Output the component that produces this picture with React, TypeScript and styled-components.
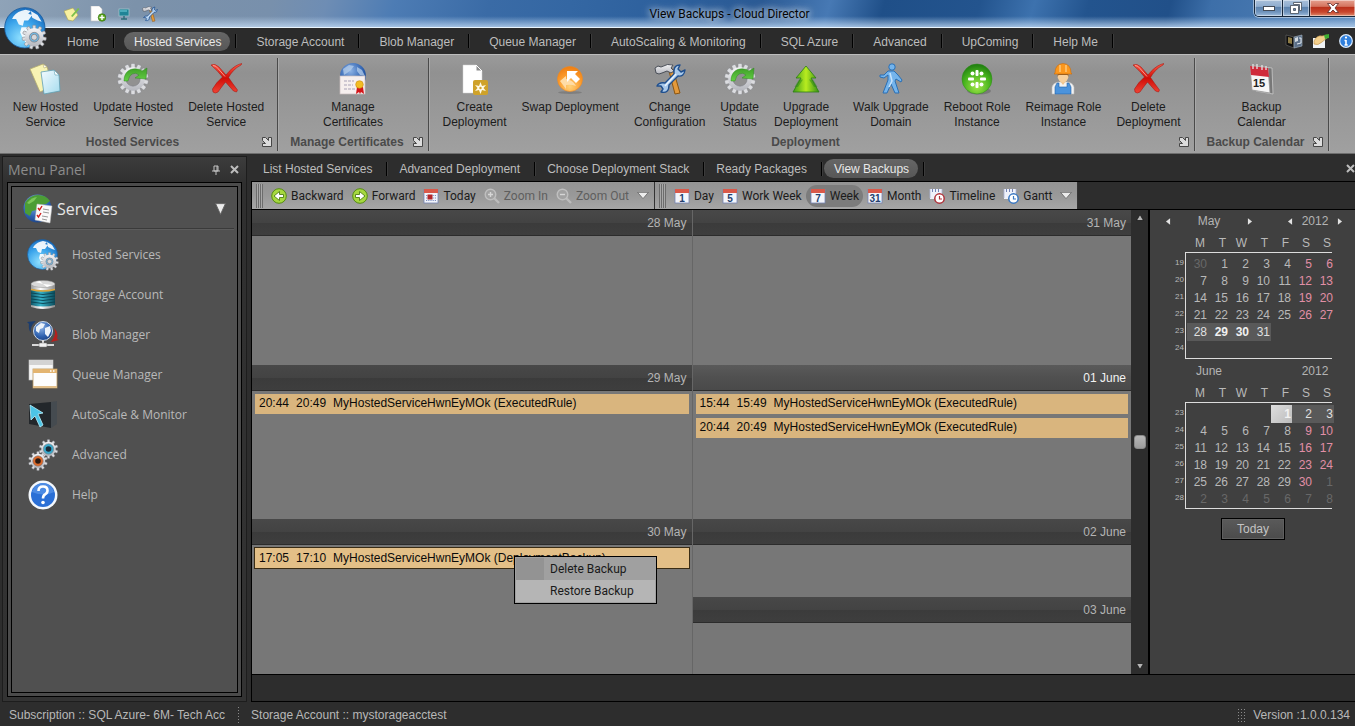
import React from 'react';
import styled, { createGlobalStyle, css } from 'styled-components';

const GlobalStyle = createGlobalStyle`
  *, *::before, *::after { box-sizing: border-box; }
  html, body { margin: 0; padding: 0; background: #2d2d2d; }
  body { font: 12px/15px "Liberation Sans", Arial, sans-serif; color: #c0c0c0; }
  button { font: inherit; color: inherit; background: none; border: 0; padding: 0; margin: 0; cursor: pointer; }
  a { color: inherit; text-decoration: none; }
  ul { list-style: none; margin: 0; padding: 0; }
  svg { display: block; flex: none; }
`;

const panelFont = '"Open Sans", Tahoma, sans-serif';
const uiFont = 'Roboto, "Segoe UI", sans-serif';

/* ---------- window frame ---------- */

const Window = styled.div`
  min-height: 100vh;
  display: flex;
  flex-direction: column;
  background: #2d2d2d;
`;

const TitleBar = styled.header`
  position: relative;
  height: 28px;
  display: flex;
  justify-content: space-between;
  align-items: flex-start;
  border-bottom: 1px solid #e8f3fc;
  background:
    linear-gradient(to bottom, rgba(210, 230, 250, 0) 60%, rgba(196, 220, 245, 0.75) 100%),
    linear-gradient(105deg, #8fa3b8 0%, #7c92aa 10%, #7890ac 20%, #6e8db4 24%, #4d7cb4 29%, #3a6ba6 36%, #3467a3 42%, #2c5f9c 50%, #2b5a94 56%, #4779b4 61%, #1f4f88 65%, #23548e 72%, #3d72ae 76%, #23548e 80%, #215089 86%, #3d6fa9 89%, #5483b8 100%);
`;

const QuickAccess = styled.nav`
  display: flex;
  align-items: center;
  gap: 10px;
  padding: 6px 0 0 64px;
  height: 22px;
`;

const QuickButton = styled.button`
  width: 16px;
  height: 16px;
`;

const TitleAnchor = styled.div`
  position: absolute;
  inset: 5px 0 auto 104px;
  text-align: center;
  pointer-events: none;
`;

const TitleText = styled.h1`
  display: inline-block;
  margin: 0;
  font: 12px/18px ${uiFont};
  color: #050505;
  text-shadow: 0 0 6px rgba(255, 255, 255, 0.9), 0 0 10px rgba(255, 255, 255, 0.8);
`;

const WindowButtons = styled.div`
  display: flex;
  height: 17px;
  border: 1px solid #16273c;
  border-top: 0;
  border-right: 0;
  border-radius: 0 0 0 5px;
  overflow: hidden;
  box-shadow: 0 0 0 1px rgba(255, 255, 255, 0.45);
`;

const WindowButton = styled.button<{ $wide?: boolean; $close?: boolean }>`
  width: ${p => (p.$wide ? '46px' : '27px')};
  display: flex;
  align-items: center;
  justify-content: center;
  border-left: 1px solid #16273c;
  box-shadow: inset 0 0 0 1px rgba(255, 255, 255, 0.45);
  background: ${p => (p.$close
    ? 'linear-gradient(#e5a08f 0%, #d4735e 40%, #b9301a 45%, #c8452d 75%, #de8a6a 100%)'
    : 'linear-gradient(#a9c0da 0%, #8fadcf 40%, #5d83ad 45%, #7094bd 75%, #9fbcdb 100%)')};
  &:first-child { border-left: 0; }
`;

const Orb = styled.button`
  position: absolute;
  left: 4px;
  top: 7px;
  z-index: 2;
`;

/* ---------- primary navigation ---------- */

const MenuBar = styled.nav`
  height: 27px;
  display: flex;
  align-items: center;
  justify-content: space-between;
  padding-left: 47px;
  background: #2b2b2b;
  border-bottom: 1px solid #bdbdbd;
`;

const TabList = styled.ul`
  display: flex;
  align-items: center;
`;

const TabItem = styled.li<{ $compact?: boolean }>`
  height: 14px;
  display: flex;
  align-items: center;
  padding: ${p => (p.$compact ? '0 5px 0 2px' : '0 5px 0 10px')};
  border-right: 1px solid #000;
  box-shadow: 1px 0 0 #3c3c3c;
`;

const TabLink = styled.a<{ $active?: boolean }>`
  padding: 0 9px 0 10px;
  height: 19px;
  line-height: 20px;
  border-radius: 10px;
  white-space: nowrap;
  color: #bdbdbd;
  ${p => p.$active && css`
    color: #e8e8e8;
    background: linear-gradient(#666, #575757);
  `}
`;

const MenuTools = styled.div`
  display: flex;
  gap: 9px;
  padding-right: 2px;
`;

/* ---------- ribbon ---------- */

const Ribbon = styled.section`
  display: flex;
  height: 99px;
  padding: 3px 0 2px;
  background: linear-gradient(#9a9a9a, #919191 18%, #989898 55%, #a0a0a0);
  border-bottom: 1px solid #6e6e6e;
`;

const RibbonGroup = styled.section<{ $width?: number }>`
  display: flex;
  flex-direction: column;
  justify-content: space-between;
  flex: none;
  min-width: ${p => (p.$width ? `${p.$width}px` : '0')};
  border-right: 1px solid #4a4a4a;
  box-shadow: 1px 0 0 #a9a9a9;
`;

const RibbonButtons = styled.div`
  display: flex;
  justify-content: center;
  gap: 15px;
  padding: 5px 8px 0;
`;

const RibbonButton = styled.button`
  display: flex;
  flex-direction: column;
  align-items: center;
  color: #1c1c1c;
  white-space: pre-line;
`;

const RibbonLabel = styled.span`
  margin-top: 5px;
  line-height: 15px;
  text-align: center;
`;

const RibbonCaption = styled.footer`
  display: flex;
  align-items: center;
  height: 18px;
  padding: 0 4px;
`;

const RibbonTitle = styled.h2`
  flex: 1;
  margin: 0;
  font-size: 12px;
  line-height: 18px;
  text-align: center;
  color: #4a4a4a;
`;

/* ---------- body layout ---------- */

const Body = styled.div`
  flex: 1;
  display: flex;
  padding: 2px 0 0 2px;
  gap: 4px;
`;

const SidePanel = styled.aside`
  width: 245px;
  flex: none;
  display: flex;
  flex-direction: column;
  padding: 0 4px 4px;
  border: 1px solid #1d1d1d;
  background: linear-gradient(#3c3c3c, #2f2f2f 26px, #333 100%);
`;

const SideHeader = styled.header`
  height: 25px;
  display: flex;
  align-items: center;
  gap: 10px;
  padding: 0 3px 0 1px;
`;

const SideTitle = styled.h2`
  flex: 1;
  margin: 0;
  font: 14px/20px ${panelFont};
  color: #8c8c8c;
`;

const SideFrame = styled.div`
  flex: 1;
  display: flex;
  padding: 3px;
  border: 1px solid #000;
  background: #4b4b4b;
`;

const SideContent = styled.div`
  flex: 1;
  padding: 3px;
  border: 1px solid #000;
  background: #505050;
`;

const ServicesHeader = styled.button`
  width: 100%;
  height: 39px;
  display: flex;
  align-items: center;
  gap: 4px;
  padding: 0 8px;
  border-bottom: 1px solid #3a3a3a;
  box-shadow: 0 1px 0 #5c5c5c;
  font: 16px/22px ${panelFont};
  color: #e6e6e6;
  text-align: left;
`;

const ServicesTitle = styled.span`
  flex: 1;
`;

const SideList = styled.ul`
  padding-top: 6px;
`;

const SideLink = styled.a`
  height: 40px;
  display: flex;
  align-items: center;
  gap: 13px;
  padding-left: 12px;
  font: 12px/18px ${panelFont};
  color: #b9b9b9;
`;

const Main = styled.main`
  flex: 1;
  min-width: 0;
  display: flex;
  flex-direction: column;
`;

const SubTabs = styled.nav`
  height: 26px;
  display: flex;
  align-items: center;
  justify-content: space-between;
  border-bottom: 1px solid #000;
`;

const ToolRow = styled.div`
  display: flex;
  height: 28px;
  border-left: 1px solid #000;
  border-bottom: 1px solid #000;
`;

const Toolbar = styled.div`
  display: flex;
  align-items: center;
  padding: 0 3px 0 4px;
  border-right: 1px solid #333;
  background: linear-gradient(#939393, #999 50%, #a6a6a6);
`;

const Grip = styled.span`
  width: 7px;
  height: 24px;
  margin-right: 4px;
  background: repeating-linear-gradient(90deg, #6c6c6c 0 1px, #a8a8a8 1px 2px);
`;

const ToolButton = styled.button<{ $active?: boolean }>`
  height: 22px;
  display: flex;
  align-items: center;
  gap: 4px;
  padding: 0 4px;
  border-radius: 11px;
  font: 12px/18px ${uiFont};
  color: #1b1b1b;
  white-space: nowrap;
  background: ${p => (p.$active ? '#7c7c7c' : 'none')};
  &:disabled { color: #5e5e5e; }
`;

const Overflow = styled.button`
  width: 14px;
  margin-left: 4px;
`;

/* ---------- schedule ---------- */

const Workspace = styled.div`
  flex: 1;
  display: flex;
  border-left: 1px solid #000;
  border-bottom: 1px solid #000;
`;

const Week = styled.div`
  flex: 1;
  min-width: 0;
  display: grid;
  grid-template-columns: 1fr 1fr;
`;

const DayColumn = styled.div`
  min-width: 0;
  display: flex;
  flex-direction: column;
  & + & { border-left: 1px solid #666; }
`;

const Day = styled.section<{ $half?: boolean }>`
  flex: ${p => (p.$half ? '1' : '2')} 1 0;
  display: flex;
  flex-direction: column;
  background: #777;
`;

const DayHeader = styled.h3<{ $today?: boolean }>`
  margin: 0;
  height: 26px;
  padding-right: 5px;
  font-size: 12px;
  font-weight: normal;
  line-height: 26px;
  text-align: right;
  color: ${p => (p.$today ? '#f2f2f2' : '#b4b4b4')};
  border-bottom: 1px solid #2c2c2c;
  background: ${p => (p.$today
    ? 'linear-gradient(#5a5a5a, #505050 50%, #4a4a4a)'
    : 'linear-gradient(#484848, #434343 50%, #3b3b3b 52%, #3e3e3e)')};
`;

const Events = styled.ul`
  display: flex;
  flex-direction: column;
  gap: 2px;
  padding: 2px;
`;

const EventSlot = styled.li`
  position: relative;
`;

const EventBar = styled.button<{ $selected?: boolean }>`
  width: 100%;
  height: 22px;
  display: flex;
  align-items: center;
  gap: 7px;
  padding: 0 4px;
  border: 1px solid ${p => (p.$selected ? '#3a2c14' : 'transparent')};
  background: ${p => (p.$selected ? '#e3bf87' : '#d9b57e')} padding-box;
  color: #0a0a0a;
  white-space: nowrap;
  overflow: hidden;
`;

const ContextMenu = styled.div`
  position: absolute;
  left: 260px;
  top: 9px;
  z-index: 1;
  width: 143px;
  padding: 1px;
  border: 1px solid #000;
  background: #a0a0a0;
`;

const ContextItem = styled.button<{ $hover?: boolean }>`
  display: block;
  width: 100%;
  height: 22px;
  padding-left: 34px;
  text-align: left;
  font: 12px/18px ${uiFont};
  color: #1a1a1a;
  background: ${p => (p.$hover ? '#b5b5b5' : 'linear-gradient(90deg, #939393 28px, #a0a0a0 28px)')};
`;

const ScrollRail = styled.div`
  width: 17px;
  display: flex;
  flex-direction: column;
  align-items: center;
  justify-content: space-between;
  padding: 4px 0;
  background: #2d2d2d;
`;

const ScrollThumb = styled.span`
  width: 12px;
  height: 14px;
  border: 1px solid #8a8a8a;
  border-radius: 3px;
  background: linear-gradient(#b8b8b8, #9c9c9c);
`;

/* ---------- date navigator ---------- */

const Navigator = styled.aside`
  width: 207px;
  flex: none;
  display: flex;
  flex-direction: column;
  align-items: flex-start;
  padding-left: 14px;
  border-left: 2px solid #000;
  background: #404040;
`;

const MonthBar = styled.div`
  height: 22px;
  display: grid;
  grid-template-columns: 8px 74px 8px 32px 8px 42px 8px;
  align-items: center;
  justify-items: center;
  line-height: 18px;
  color: #b4b4b4;
`;

const MonthName = styled.span`
  grid-column: 2;
`;

const YearName = styled.span`
  grid-column: 6;
`;

const ArrowButton = styled.button<{ $col: number }>`
  grid-column: ${p => p.$col};
  grid-row: 1;
`;

const MonthTable = styled.table`
  display: block;
  width: 170px;
  margin-bottom: 1px;
  color: #b9b9b9;
  thead, tbody { display: block; }
  thead { height: 20px; padding-top: 2px; }
  tbody {
    height: 107px;
    padding: 3px 0 2px;
    background:
      linear-gradient(#ddd, #ddd) 21px 0 / 1px 100% no-repeat,
      linear-gradient(#ddd, #ddd) 21px 0 / 147px 1px no-repeat,
      linear-gradient(#ddd, #ddd) 21px 100% / 147px 1px no-repeat;
  }
  tr { display: grid; grid-template-columns: 23px repeat(7, 21px); height: 17px; }
`;

const WeekdayCell = styled.th`
  padding: 0 3px 0 0;
  font-weight: normal;
  line-height: 18px;
  text-align: right;
`;

const WeekCell = styled.th`
  padding: 0 3px 0 0;
  font-size: 8px;
  font-weight: normal;
  line-height: 16px;
  text-align: right;
`;

type Tone = 'muted' | 'weekend' | 'range' | 'bold' | 'current' | 'normal';

const toneColor: Record<Tone, string> = {
  muted: '#686868',
  weekend: '#e08fa6',
  range: '#e0e0e0',
  bold: '#f0f0f0',
  current: '#f2f2f2',
  normal: '#b9b9b9',
};

const DateCell = styled.td<{ $tone: Tone }>`
  padding: 0 1px 0 0;
  text-align: right;
  line-height: 18px;
  color: ${p => toneColor[p.$tone]};
  font-weight: ${p => (p.$tone === 'bold' || p.$tone === 'current' ? 'bold' : 'normal')};
  ${p => (p.$tone === 'range' || p.$tone === 'bold') && css`background: #595959;`}
  ${p => p.$tone === 'current' && css`background: linear-gradient(135deg, #dedede, #bcbcbc);`}
`;

const TodayButton = styled.button`
  width: 64px;
  height: 22px;
  margin: 8px 0 0 57px;
  border: 1px solid #000;
  background: linear-gradient(#5a5a5a, #4b4b4b);
  box-shadow: inset 0 0 0 1px #5f5f5f;
  color: #c4c4c4;
`;

const BottomStrip = styled.div`
  height: 27px;
  border-left: 1px solid #000;
  border-bottom: 1px solid #000;
`;

/* ---------- status bar ---------- */

const StatusBar = styled.footer`
  height: 24px;
  display: flex;
  align-items: center;
  padding: 1px 5px 0 9px;
  color: #b8b8b8;
`;

const StatusText = styled.span`
  line-height: 16px;
  white-space: nowrap;
`;

const DotColumn = styled.span`
  width: 1px;
  height: 16px;
  margin: 0 12px 0 13px;
  background: repeating-linear-gradient(#8a8a8a 0 1px, transparent 1px 3px);
`;

const DotGrid = styled.span`
  width: 9px;
  height: 14px;
  margin: 0 7px 0 auto;
  background: radial-gradient(circle, #8a8a8a 1px, transparent 1px) 0 0 / 3px 3px;
`;

/* ---------- icons ---------- */

const SharedGradients = () => (
  <svg width="0" height="0" style={{ position: 'absolute' }} aria-hidden="true">
    <defs>
      <radialGradient id="blueBall" cx="0.4" cy="0.75" r="0.8">
        <stop offset="0" stopColor="#8fe0ff" />
        <stop offset="0.55" stopColor="#3aa3ea" />
        <stop offset="1" stopColor="#1766b8" />
      </radialGradient>
      <radialGradient id="navyBall" cx="0.4" cy="0.3" r="0.8">
        <stop offset="0" stopColor="#8fb4e6" />
        <stop offset="0.6" stopColor="#2f62b0" />
        <stop offset="1" stopColor="#173a7a" />
      </radialGradient>
      <linearGradient id="silver" x1="0" y1="0" x2="0" y2="1">
        <stop offset="0" stopColor="#f4f4f6" />
        <stop offset="1" stopColor="#b4b6bd" />
      </linearGradient>
      <linearGradient id="red" x1="0" y1="0" x2="0" y2="1">
        <stop offset="0" stopColor="#ff5a48" />
        <stop offset="0.5" stopColor="#d00d06" />
        <stop offset="1" stopColor="#ee4436" />
      </linearGradient>
      <linearGradient id="green" x1="0" y1="0" x2="0" y2="1">
        <stop offset="0" stopColor="#3f9f28" />
        <stop offset="1" stopColor="#64cf45" />
      </linearGradient>
      <linearGradient id="lime" x1="0" y1="0" x2="1" y2="0">
        <stop offset="0" stopColor="#3d9b1c" />
        <stop offset="0.5" stopColor="#b8ec1f" />
        <stop offset="1" stopColor="#358f17" />
      </linearGradient>
      <radialGradient id="greenBall" cx="0.5" cy="0.75" r="0.75">
        <stop offset="0" stopColor="#a2e64a" />
        <stop offset="0.6" stopColor="#46b31d" />
        <stop offset="1" stopColor="#1e7a10" />
      </radialGradient>
      <radialGradient id="orangeBall" cx="0.5" cy="0.8" r="0.8">
        <stop offset="0" stopColor="#ffd27a" />
        <stop offset="0.6" stopColor="#fb9a2b" />
        <stop offset="1" stopColor="#ee7d12" />
      </radialGradient>
      <linearGradient id="skyPage" x1="0" y1="0" x2="1" y2="1">
        <stop offset="0" stopColor="#f4fbff" />
        <stop offset="1" stopColor="#a5dcee" />
      </linearGradient>
      <linearGradient id="tealDisk" x1="0" y1="0" x2="1" y2="0">
        <stop offset="0" stopColor="#0e5567" />
        <stop offset="0.4" stopColor="#37b4ca" />
        <stop offset="1" stopColor="#0b4b5b" />
      </linearGradient>
      <linearGradient id="steelCap" x1="0" y1="0" x2="1" y2="0">
        <stop offset="0" stopColor="#9a9a9a" />
        <stop offset="0.4" stopColor="#ffffff" />
        <stop offset="1" stopColor="#8a8a8a" />
      </linearGradient>
    </defs>
  </svg>
);

type GearProps = { cx: number; cy: number; r: number; teeth?: number; hole?: number; holeFill?: string };

const Gear = ({ cx, cy, r, teeth = 10, hole = 0.4, holeFill = '#8d8d8d' }: GearProps) => (
  <g>
    {Array.from({ length: teeth }, (_, i) => (
      <rect
        key={i}
        x={cx - r * 0.13}
        y={cy - r}
        width={r * 0.26}
        height={r * 0.4}
        rx={r * 0.06}
        fill="#dcdde0"
        stroke="#7d7f86"
        strokeWidth="0.4"
        transform={`rotate(${(360 / teeth) * i} ${cx} ${cy})`}
      />
    ))}
    <circle cx={cx} cy={cy} r={r * 0.76} fill="url(#silver)" />
    <circle cx={cx} cy={cy} r={r * hole} fill={holeFill} stroke="#7d7f86" strokeWidth="0.6" />
  </g>
);

const GlobeGearIcon = ({ size = 32 }: { size?: number }) => (
  <svg width={size} height={size} viewBox="0 0 32 32">
    <circle cx="15.500" cy="15.500" r="15" fill="url(#blueBall)" stroke="#1a5b9c" strokeWidth="0.6" />
    <path d="M7 7q3-4 9-5l4 1-2 2 3 1-3 4-3 0-1 4-3-1-2-4-3 0zM20 3l5 3 3 5-3-1-4-2zM13 15l5 0 4 4-3 5-2 4-3-5-2-4z" fill="#fff" opacity="0.9" />
    <Gear cx={22.500} cy={22.500} r={9} teeth={11} hole={0.4} holeFill="#6fbcea" />
    <circle cx="22.500" cy="22.500" r="2.200" fill="#d6d7da" stroke="#7d7f86" strokeWidth="0.6" />
  </svg>
);

const NewPagesIcon = () => (
  <svg width="32" height="32" viewBox="0 0 32 32">
    <path d="M1 6l13-5 4 3 6 19-13 6z" fill="#f8f3b4" stroke="#b5ad6e" strokeWidth="0.8" />
    <path d="M14 1l1 4 3-1z" fill="#fff" stroke="#b5ad6e" strokeWidth="0.6" />
    <path d="M12 9l13-2 5 5 1 16-16 3z" fill="url(#skyPage)" stroke="#5f9fb4" strokeWidth="0.8" />
    <path d="M25 7l1 5 4 0z" fill="#fff" stroke="#5f9fb4" strokeWidth="0.6" />
  </svg>
);

const GearArrowIcon = () => (
  <svg width="32" height="32" viewBox="0 0 32 32">
    <Gear cx={16} cy={16} r={15.500} teeth={14} hole={0.46} holeFill="#919191" />
    <path d="M7 18C7 9 13 5 20 6q3 0 5 2l5-3-1 11-11-1 4-3q-3-3-7-1-3 2-4 7z" fill="url(#green)" stroke="#2f8a1e" strokeWidth="0.5" />
  </svg>
);

const CrossIcon = () => (
  <svg width="32" height="32" viewBox="0 0 32 32">
    <path d="M1 2q4-2 8 2l7 8C20 7 25 2 32 0.500l-1 1.500C25 5 21 10 18.500 14.500q4 6 9 12.500l-1 2-3-1-8-9Q10 26 8 29q-3 2-5 0l-0.500-3q4-7 10-12Q7 7 1 2z" fill="url(#red)" stroke="#a50a05" strokeWidth="0.5" />
    <path d="M3 2.500q3 0 5 3l7 8" fill="none" stroke="#ffb3a6" strokeWidth="1" opacity="0.8" />
  </svg>
);

const CertificateIcon = () => (
  <svg width="32" height="32" viewBox="0 0 32 32">
    <circle cx="16" cy="13" r="13" fill="url(#navyBall)" />
    <path d="M6 6l6-4 5 1-3 4-4 3-3 2zM20 4l5 3 3 6-5-1-3-4z" fill="#b5cdea" opacity="0.75" />
    <rect x="3" y="13" width="25" height="18" fill="#f6efee" stroke="#c9bdbd" strokeWidth="0.7" />
    <path d="M7 18h10M7 22h9M7 26h11" stroke="#a9a3b8" strokeWidth="1" strokeDasharray="3 1" />
    <path d="M20 24l-1 7 3-2 1 2 1-2 3 2-1-7z" fill="#d3161a" />
    <circle cx="22.500" cy="21.500" r="3.800" fill="#f3bd23" stroke="#c98b0d" strokeWidth="0.6" />
  </svg>
);

const CreateDeploymentIcon = () => (
  <svg width="32" height="32" viewBox="0 0 32 32">
    <path d="M4 2h13l6 6v22H4z" fill="#fff" stroke="#d0d0d0" strokeWidth="0.5" />
    <path d="M17 2v6h6z" fill="#8e8e8e" stroke="#fff" strokeWidth="1" />
    <rect x="14" y="17" width="15" height="15" rx="2" fill="#cfa22a" />
    <path d="M21.500 19l1.500 4 4-1-2.500 3 2.500 3-4-1-1.500 4-1.500-4-4 1 2.500-3-2.500-3 4 1z" fill="#fffbe8" />
    <circle cx="21.500" cy="25" r="1.200" fill="#cfa22a" />
  </svg>
);

const SwapIcon = () => (
  <svg width="32" height="32" viewBox="0 0 32 32">
    <ellipse cx="16" cy="29.500" rx="12" ry="1.500" fill="#555" opacity="0.35" />
    <circle cx="16" cy="16" r="12.500" fill="url(#orangeBall)" stroke="#f08a20" strokeWidth="0.6" />
    <path d="M6 18l6-5v3q7 1 10 7-5-2-10-1v4z" fill="#ffdca6" />
    <path d="M13 8h11l-3 3 5 5-4 4-5-5-4 4z" fill="#fff" />
  </svg>
);

const ToolsIcon = ({ size = 32 }: { size?: number }) => (
  <svg width={size} height={size} viewBox="0 0 32 32">
    <path d="M15 8l4-2 7 24-5 1z" fill="#e39a3c" stroke="#8c5510" strokeWidth="1" />
    <path d="M1 5l3-2 3 1q7-4 12-2l-2 3 3 3-3 2-4-2-5 2-3 1-3-1z" fill="url(#silver)" stroke="#4a4f58" strokeWidth="1" />
    <path d="M31 7l-4 2-3-3 2-4q-6 0-6 6l0 3-9 9q-6-1-8 3l4 0 2 3-2 3q8 2 8-7l9-9q6 1 7-6z" fill="#a9c9ea" stroke="#1f4f8e" strokeWidth="1.400" strokeLinejoin="round" />
    <path d="M11 23l11-12" stroke="#e8f3fd" strokeWidth="1.500" />
  </svg>
);

const UpgradeIcon = () => (
  <svg width="32" height="32" viewBox="0 0 32 32">
    <path d="M16 3l10 12h-5l8 14H3l8-14H6z" fill="url(#lime)" stroke="#2b7d12" strokeWidth="0.8" />
    <path d="M9 16.500h4L8 24H4.500zM23 16.500h-4l5 7.500h3.500z" fill="#2f8a16" opacity="0.55" />
  </svg>
);

const WalkIcon = () => (
  <svg width="32" height="32" viewBox="0 0 32 32">
    <g fill="#74b4ec" stroke="#2a6fb4" strokeWidth="1" strokeLinejoin="round">
      <path d="M13 8l6 0 4 4 4 5-1 2-5-3-1 2 4 12h-4l-4-9-4 9H8l5-13 0-5-4 3-4-1-0-2 4 0z" />
      <circle cx="17" cy="4" r="3.200" />
    </g>
    <path d="M15 10l2 8-3 6" fill="none" stroke="#c7e3fb" strokeWidth="1.500" />
  </svg>
);

const RebootIcon = () => (
  <svg width="32" height="32" viewBox="0 0 32 32">
    <ellipse cx="18" cy="28" rx="12" ry="3.500" fill="#444" opacity="0.35" />
    <circle cx="16" cy="16" r="15" fill="url(#greenBall)" stroke="#2d8c17" strokeWidth="0.5" />
    <g fill="#fff">
      <rect x="14.500" y="7" width="3" height="6" rx="1" />
      <rect x="14.500" y="19" width="3" height="6" rx="1" />
      <rect x="7" y="14.500" width="6" height="3" rx="1" />
      <rect x="19" y="14.500" width="6" height="3" rx="1" />
      <circle cx="11.500" cy="10.500" r="2" />
      <circle cx="20.500" cy="10.500" r="2" />
      <circle cx="11.500" cy="21.500" r="2" />
      <circle cx="20.500" cy="21.500" r="2" />
    </g>
  </svg>
);

const WorkerIcon = () => (
  <svg width="32" height="32" viewBox="0 0 32 32">
    <path d="M5 31v-7q1-4 6-5h10q5 1 6 5v7z" fill="#f2f2f2" stroke="#bdbdbd" strokeWidth="0.6" />
    <path d="M8 31v-7l2-4h2v4h8v-4h2l2 4v7z" fill="#4b93dc" stroke="#2463a8" strokeWidth="0.6" />
    <path d="M13 18l3 4 3-4z" fill="#f0c48c" />
    <ellipse cx="16" cy="13" rx="5.500" ry="6.500" fill="#f6cf9c" />
    <path d="M10.500 10h11v4l-1-2h-9l-1 2z" fill="#8c5a24" />
    <path d="M8 10q0-9 8-9.500Q24 1 24 10l1 1H7z" fill="#fb971d" stroke="#cf6c06" strokeWidth="0.6" />
    <path d="M13 9V2M19 9V2" stroke="#ffd28e" strokeWidth="1.200" />
  </svg>
);

const BackupCalendarIcon = () => (
  <svg width="32" height="32" viewBox="0 0 32 32">
    <path d="M9 3l18 2 1 26-17-3z" fill="#777" stroke="#c9c9c9" strokeWidth="0.8" />
    <path d="M5 3l18 2 2 25-18-3z" fill="#f6f6f6" stroke="#999" strokeWidth="0.8" />
    <path d="M5 3l18 2 1 9L6 12z" fill="#cf2a3a" />
    <path d="M8 1v5M12 1v5M17 2v5M21 3v4" stroke="#e4e4e4" strokeWidth="1.300" />
    <text x="8" y="24" fontFamily="Liberation Sans, sans-serif" fontWeight="bold" fontSize="11" fill="#222">15</text>
  </svg>
);

const LaunchIcon = () => (
  <svg width="12" height="12" viewBox="0 0 12 12">
    <path d="M1.500 1.500h3l3 3v-3h3v9h-9v-3h3l-3-3z" fill="#dcdcdc" stroke="#474747" strokeWidth="1" strokeLinejoin="round" />
  </svg>
);

const NoteIcon = () => (
  <svg width="16" height="16" viewBox="0 0 16 16">
    <path d="M0 5l9-3 5 7-5 6-5-1z" fill="#f7f0a0" stroke="#a9a253" strokeWidth="0.6" />
    <path d="M7 10l7-8 1.500 1-7 8z" fill="#7ac04a" />
  </svg>
);

const AddPageIcon = () => (
  <svg width="16" height="16" viewBox="0 0 16 16">
    <path d="M1 0h8l3 3v12H1z" fill="#fdfdfd" stroke="#c4c4c4" strokeWidth="0.6" />
    <circle cx="12" cy="11.500" r="3.800" fill="#5aa51c" stroke="#2f6e08" strokeWidth="0.6" />
    <path d="M12 9v5M9.500 11.500h5" stroke="#fff" strokeWidth="1.400" />
  </svg>
);

const MonitorIcon = () => (
  <svg width="16" height="16" viewBox="0 0 16 16">
    <rect x="3" y="3" width="10" height="7" fill="#1f8496" stroke="#9fc3cc" strokeWidth="0.8" />
    <path d="M4 5h7" stroke="#79d2de" />
    <path d="M8 10v3M5 13h6" stroke="#2c6c78" strokeWidth="1.400" />
  </svg>
);

const BookIcon = () => (
  <svg width="18" height="16" viewBox="0 0 18 16">
    <path d="M1 2l8 2v11l-8-3z" fill="#0d0d0d" stroke="#6a6a6a" strokeWidth="0.6" />
    <path d="M17 2L9 4v11l8-2z" fill="#5b6f88" stroke="#a9b8c8" strokeWidth="0.6" />
    <path d="M3 4l4 1v6l-4-1z" fill="#8c7a45" />
    <path d="M10 5l3-1v4l-3 1z" fill="#d3d9e0" />
    <path d="M14 5l2 0v5l-4 1" fill="none" stroke="#e3e9f0" strokeWidth="1" />
  </svg>
);

const HandIcon = () => (
  <svg width="18" height="16" viewBox="0 0 18 16">
    <path d="M1 5h12v10H1z" fill="#f0f3f6" />
    <path d="M2 8q3-6 8-5l5-1v3l-5 4q-4 4-8 2z" fill="#f3cf8c" stroke="#b88c42" strokeWidth="0.6" />
    <path d="M12 2l5-1v4l-4 1z" fill="#3fae33" />
  </svg>
);

const InfoIcon = () => (
  <svg width="14" height="14" viewBox="0 0 14 14">
    <circle cx="7" cy="7" r="6.300" fill="#2f7fdc" stroke="#dcebfb" strokeWidth="1.200" />
    <path d="M7 6v5M5.500 6.500H7M5.500 11h3.200" stroke="#fff" strokeWidth="1.600" />
    <circle cx="7" cy="3.600" r="1.100" fill="#fff" />
  </svg>
);

const PinIcon = () => (
  <svg width="8" height="10" viewBox="0 0 8 10">
    <path d="M2 1h4v5H2zM0 6h8M4 6v4M5 1v5" fill="none" stroke="#c2c2c2" strokeWidth="1" />
  </svg>
);

const CloseIcon = () => (
  <svg width="9" height="9" viewBox="0 0 9 9">
    <path d="M1 1l7 7M8 1l-7 7" stroke="#bdbdbd" strokeWidth="2" />
  </svg>
);

const TriangleDown = ({ width = 11, height = 12 }: { width?: number; height?: number }) => (
  <svg width={width} height={height} viewBox="0 0 10 10" preserveAspectRatio="none">
    <path d="M0.500 0.500h9L5 9.500z" fill="#ececec" stroke="#5f5f5f" strokeWidth="0.8" />
  </svg>
);

const ServicesIcon = () => (
  <svg width="30" height="30" viewBox="0 0 30 30">
    <circle cx="14.500" cy="14.500" r="14" fill="url(#navyBall)" />
    <path d="M2 9q5-8 13-8 8 0 12 6l-4 3-6 1-3 5-5 1-2 5-5-3z" fill="#4c9d35" />
    <path d="M4 9q5-6 10-6l-3 4-5 3z" fill="#7cc659" />
    <path d="M14 10l15 2-2 17-15-3z" fill="#fafafa" stroke="#b9b9b9" strokeWidth="0.5" />
    <path d="M15 14l1.500 2 2.500-4M14 21l1.500 2 2.500-4" fill="none" stroke="#d01c1c" strokeWidth="1.400" />
    <path d="M20 15l6 1M20 18l6 1M19 22l6 1M19 25l5 1" stroke="#999" strokeWidth="1" />
  </svg>
);

const StorageIcon = () => (
  <svg width="32" height="32" viewBox="0 0 32 32">
    <path d="M4 24v4q12 4 24 0v-4z" fill="url(#steelCap)" />
    <path d="M4 8h24v18q-12 3-24 0z" fill="url(#tealDisk)" />
    <path d="M4 14q12 3 24 0M4 17q12 3 24 0M4 20q12 3 24 0M4 23q12 3 24 0" fill="none" stroke="#0a4250" strokeWidth="0.9" />
    <path d="M4 5v5q12 3 24 0V5z" fill="url(#steelCap)" />
    <path d="M4 10.500q12 3 24 0" fill="none" stroke="#e0a63c" strokeWidth="1.500" />
    <ellipse cx="16" cy="5" rx="12" ry="3.500" fill="#d9d9d9" stroke="#8f8f8f" strokeWidth="0.5" />
    <path d="M16 5l-8-2 5-1zM16 5l9 1-5 2z" fill="#fff" />
  </svg>
);

const BlobIcon = () => (
  <svg width="32" height="32" viewBox="0 0 32 32">
    <path d="M0 3l9-1-3 3q-3 4-2 9Q1 10 2 5z" fill="#1c3d6e" />
    <path d="M32 21l-8 2 3-5q2-4 0-9 5 5 3 11z" fill="#b3201e" />
    <circle cx="16" cy="12" r="9.500" fill="url(#navyBall)" stroke="#c9d6e6" strokeWidth="1" />
    <path d="M9 8l5-4 4 1-2 4-3 1-1 4-3-2zM18 9l5-2 1 5-3 6-3-3z" fill="#edf3fa" />
    <path d="M16 21v4M5 26h22" stroke="#d9d9d9" strokeWidth="2" />
    <rect x="12" y="24" width="8" height="4" rx="1" fill="#f2f2f2" stroke="#777" strokeWidth="0.5" />
  </svg>
);

const QueueIcon = () => (
  <svg width="32" height="32" viewBox="0 0 32 32">
    <rect x="2" y="1" width="24" height="20" fill="#f7f7f7" stroke="#c2c2c2" strokeWidth="0.6" />
    <rect x="2" y="1" width="24" height="5" fill="#d3d3d3" />
    <rect x="6" y="10" width="24" height="19" fill="#fdfdfd" stroke="#b8975f" strokeWidth="0.8" />
    <rect x="6" y="10" width="24" height="4" fill="#e3b470" />
    <path d="M23 12h1.500M26 12h1.500" stroke="#fff" strokeWidth="1.500" />
    <rect x="6" y="27" width="24" height="2" fill="#e3c08b" />
  </svg>
);

const AutoScaleIcon = () => (
  <svg width="32" height="32" viewBox="0 0 32 32">
    <path d="M2 5l22-2v26L2 25z" fill="#23272b" />
    <path d="M24 3l6-1v23l-6 4z" fill="#454b50" />
    <path d="M3 6l13 8-5 1 5 11-3 2-5-11-4 4z" fill="#4cc4e6" stroke="#b9f0fc" strokeWidth="0.8" />
  </svg>
);

const GearsIcon = () => (
  <svg width="32" height="32" viewBox="0 0 32 32">
    <Gear cx={21.500} cy={10} r={9.500} hole={0.55} holeFill="#3aa7c9" />
    <circle cx="21.500" cy="10" r="2.800" fill="#1b2a36" />
    <Gear cx={11} cy={22} r={9.500} hole={0.55} holeFill="#d9692b" />
    <circle cx="11" cy="22" r="2.800" fill="#2b1a12" />
  </svg>
);

const HelpIcon = () => (
  <svg width="32" height="32" viewBox="0 0 32 32">
    <circle cx="16" cy="16" r="14.500" fill="#f4f8fd" />
    <circle cx="16" cy="16" r="12" fill="#2a6fd6" />
    <path d="M5 13q3-9 11-9t11 9q-10 5-22 0z" fill="#5b97ea" opacity="0.7" />
    <path d="M11.500 12q0-4.500 4.500-4.500t4.500 4q0 2.500-2.500 4-2 1-2 4" fill="none" stroke="#fff" strokeWidth="2.600" />
    <circle cx="16" cy="23.500" r="1.800" fill="#fff" />
  </svg>
);

const ArrowBallIcon = ({ forward }: { forward?: boolean }) => (
  <svg width="16" height="16" viewBox="0 0 16 16">
    <circle cx="8" cy="8" r="7.300" fill="#a6d83f" stroke="#568c12" strokeWidth="1" />
    <path d={forward ? 'M3.500 6.500h4V3.500L13 8l-5.500 4.500V9.500h-4z' : 'M12.500 6.500h-4V3.500L3 8l5.500 4.500V9.500h4z'} fill="#fff" stroke="#4f7d15" strokeWidth="0.9" />
  </svg>
);

const ZoomIcon = ({ plus }: { plus?: boolean }) => (
  <svg width="16" height="16" viewBox="0 0 16 16">
    <path d="M10 10l5 5" stroke="#bcbcbc" strokeWidth="2.400" />
    <circle cx="6.500" cy="6.500" r="5.300" fill="#a2a2a2" stroke="#bfbfbf" strokeWidth="1.400" />
    <path d={plus ? 'M4 6.500h5M6.500 4v5' : 'M4 6.500h5'} stroke="#d6d6d6" strokeWidth="1.400" />
  </svg>
);

const DateIcon = ({ label }: { label?: string }) => (
  <svg width="16" height="16" viewBox="0 0 16 16">
    <rect x="1" y="1.500" width="14" height="13.500" fill="#f3f5fb" stroke="#7584b4" strokeWidth="0.8" />
    <rect x="1" y="1" width="14" height="4" fill="#d9594a" />
    {label ? (
      <text x="8" y="13.500" textAnchor="middle" fontFamily="Liberation Sans, sans-serif" fontWeight="bold" fontSize="10" fill="#24406e">{label}</text>
    ) : (
      <g>
        <path d="M3 7.500h10M3 10h10M3 12.500h10" stroke="#7d8fc0" strokeWidth="1.200" strokeDasharray="1.200 1" />
        <rect x="4.500" y="6.500" width="5" height="5" fill="#b3262a" />
      </g>
    )}
  </svg>
);

const ClockGridIcon = ({ tone }: { tone: string }) => (
  <svg width="16" height="16" viewBox="0 0 16 16">
    <path d="M1 1h12v6H8l-3 4H1z" fill="#eef1fa" />
    <path d="M3.500 1v3M6.500 1v3M9.500 1v3" stroke="#7483b5" strokeWidth="1" />
    <path d="M1 1v9M13 1v4" stroke="#a9b4d6" strokeWidth="0.8" />
    <circle cx="10.500" cy="10.500" r="4.700" fill="#fff" stroke={tone} strokeWidth="1.500" />
    <path d="M10.500 8v3h2.500" fill="none" stroke={tone} strokeWidth="1.200" />
  </svg>
);

const SideArrow = ({ right }: { right?: boolean }) => (
  <svg width="6" height="9" viewBox="0 0 6 9">
    <path d={right ? 'M0.500 0.500v8l5-4z' : 'M5.500 0.500v8l-5-4z'} fill="#e2e2e2" stroke="#222" strokeWidth="0.6" />
  </svg>
);

const ScrollArrow = ({ down }: { down?: boolean }) => (
  <svg width="8" height="8" viewBox="0 0 8 8">
    <path d={down ? 'M0.500 1.500h7l-3.500 6z' : 'M0.500 6.500h7L4 0.500z'} fill="#b5b5b5" stroke="#1a1a1a" strokeWidth="0.8" />
  </svg>
);

/* ---------- data ---------- */

const menuTabs = ['Home', 'Hosted Services', 'Storage Account', 'Blob Manager', 'Queue Manager', 'AutoScaling & Monitoring', 'SQL Azure', 'Advanced', 'UpComing', 'Help Me'];
const subTabs = ['List Hosted Services', 'Advanced Deployment', 'Choose Deployment Stack', 'Ready Packages', 'View Backups'];

type Command = [string, React.ReactNode];

const ribbonGroups: { title: string; width?: number; commands: Command[] }[] = [
  {
    title: 'Hosted Services',
    width: 278,
    commands: [
      ['New Hosted\nService', <NewPagesIcon />],
      ['Update Hosted\nService', <GearArrowIcon />],
      ['Delete Hosted\nService', <CrossIcon />],
    ],
  },
  { title: 'Manage Certificates', width: 151, commands: [['Manage\nCertificates', <CertificateIcon />]] },
  {
    title: 'Deployment',
    width: 766,
    commands: [
      ['Create\nDeployment', <CreateDeploymentIcon />],
      ['Swap Deployment', <SwapIcon />],
      ['Change\nConfiguration', <ToolsIcon />],
      ['Update\nStatus', <GearArrowIcon />],
      ['Upgrade\nDeployment', <UpgradeIcon />],
      ['Walk Upgrade\nDomain', <WalkIcon />],
      ['Reboot Role\nInstance', <RebootIcon />],
      ['Reimage Role\nInstance', <WorkerIcon />],
      ['Delete\nDeployment', <CrossIcon />],
    ],
  },
  { title: 'Backup Calendar', width: 134, commands: [['Backup\nCalendar', <BackupCalendarIcon />]] },
];

const sideItems: Command[] = [
  ['Hosted Services', <GlobeGearIcon />],
  ['Storage Account', <StorageIcon />],
  ['Blob Manager', <BlobIcon />],
  ['Queue Manager', <QueueIcon />],
  ['AutoScale & Monitor', <AutoScaleIcon />],
  ['Advanced', <GearsIcon />],
  ['Help', <HelpIcon />],
];

const viewModes: Command[] = [
  ['Day', <DateIcon label="1" />],
  ['Work Week', <DateIcon label="5" />],
  ['Week', <DateIcon label="7" />],
  ['Month', <DateIcon label="31" />],
  ['Timeline', <ClockGridIcon tone="#b0333b" />],
  ['Gantt', <ClockGridIcon tone="#3a78c2" />],
];

type Backup = { start: string; end: string; name: string; selected?: boolean };
type DayData = { label: string; today?: boolean; half?: boolean; backups: Backup[] };

const rule = 'MyHostedServiceHwnEyMOk (ExecutedRule)';
const columns: DayData[][] = [
  [
    { label: '28 May', backups: [] },
    { label: '29 May', backups: [{ start: '20:44', end: '20:49', name: rule }] },
    { label: '30 May', backups: [{ start: '17:05', end: '17:10', name: 'MyHostedServiceHwnEyMOk (DeploymentBackup)', selected: true }] },
  ],
  [
    { label: '31 May', backups: [] },
    { label: '01 June', today: true, backups: [{ start: '15:44', end: '15:49', name: rule }, { start: '20:44', end: '20:49', name: rule }] },
    { label: '02 June', half: true, backups: [] },
    { label: '03 June', half: true, backups: [] },
  ],
];

type MonthData = { name: string; weeks: { no: number; days: (number | null)[] }[]; tone: (day: number, row: number, col: number) => Tone };

const may: MonthData = {
  name: 'May',
  weeks: [
    { no: 19, days: [30, 1, 2, 3, 4, 5, 6] },
    { no: 20, days: [7, 8, 9, 10, 11, 12, 13] },
    { no: 21, days: [14, 15, 16, 17, 18, 19, 20] },
    { no: 22, days: [21, 22, 23, 24, 25, 26, 27] },
    { no: 23, days: [28, 29, 30, 31, null, null, null] },
    { no: 24, days: [] },
  ],
  tone: (day, row, col) => {
    if (row === 0 && col === 0) return 'muted';
    if (row === 4) return day === 29 || day === 30 ? 'bold' : 'range';
    return col > 4 ? 'weekend' : 'normal';
  },
};

const june: MonthData = {
  name: 'June',
  weeks: [
    { no: 23, days: [null, null, null, null, 1, 2, 3] },
    { no: 24, days: [4, 5, 6, 7, 8, 9, 10] },
    { no: 25, days: [11, 12, 13, 14, 15, 16, 17] },
    { no: 26, days: [18, 19, 20, 21, 22, 23, 24] },
    { no: 27, days: [25, 26, 27, 28, 29, 30, 1] },
    { no: 28, days: [2, 3, 4, 5, 6, 7, 8] },
  ],
  tone: (day, row, col) => {
    if (row === 0) return day === 1 ? 'current' : 'range';
    if (row === 5 || (row === 4 && col === 6)) return 'muted';
    return col > 4 ? 'weekend' : 'normal';
  },
};

const Month = ({ month, arrows }: { month: MonthData; arrows?: boolean }) => (
  <>
    <MonthBar>
      {arrows && <ArrowButton $col={1} aria-label="Previous month"><SideArrow /></ArrowButton>}
      <MonthName>{month.name}</MonthName>
      {arrows && <ArrowButton $col={3} aria-label="Next month"><SideArrow right /></ArrowButton>}
      {arrows && <ArrowButton $col={5} aria-label="Previous year"><SideArrow /></ArrowButton>}
      <YearName>2012</YearName>
      {arrows && <ArrowButton $col={7} aria-label="Next year"><SideArrow right /></ArrowButton>}
    </MonthBar>
    <MonthTable>
      <thead>
        <tr>
          <td />
          {['M', 'T', 'W', 'T', 'F', 'S', 'S'].map((d, i) => <WeekdayCell key={i} scope="col">{d}</WeekdayCell>)}
        </tr>
      </thead>
      <tbody>
        {month.weeks.map((week, row) => (
          <tr key={week.no}>
            <WeekCell scope="row">{week.no}</WeekCell>
            {week.days.map((day, col) => (
              <DateCell key={col} $tone={day === null ? 'normal' : month.tone(day, row, col)}>{day}</DateCell>
            ))}
          </tr>
        ))}
      </tbody>
    </MonthTable>
  </>
);

export default function App() {
  return (
    <Window>
      <GlobalStyle />
      <SharedGradients />
      <TitleBar>
        <Orb aria-label="Application menu"><GlobeGearIcon size={43} /></Orb>
        <QuickAccess aria-label="Quick access">
          <QuickButton aria-label="Notes"><NoteIcon /></QuickButton>
          <QuickButton aria-label="New"><AddPageIcon /></QuickButton>
          <QuickButton aria-label="Monitor"><MonitorIcon /></QuickButton>
          <QuickButton aria-label="Settings"><ToolsIcon size={16} /></QuickButton>
        </QuickAccess>
        <TitleAnchor><TitleText>View Backups - Cloud Director</TitleText></TitleAnchor>
        <WindowButtons>
          <WindowButton aria-label="Minimize">
            <svg width="12" height="5" viewBox="0 0 12 5"><rect x="0.500" y="0.500" width="11" height="4" fill="#fff" stroke="#444c58" /></svg>
          </WindowButton>
          <WindowButton aria-label="Restore">
            <svg width="12" height="12" viewBox="0 0 12 12">
              <path d="M3.500 0.500h8v8h-2v-6h-6z" fill="#fff" stroke="#444c58" strokeWidth="0.8" />
              <path d="M0.500 3.500h8v8h-8zM3.500 6.500h2v2h-2z" fill="#fff" fillRule="evenodd" stroke="#444c58" strokeWidth="0.8" />
            </svg>
          </WindowButton>
          <WindowButton $wide $close aria-label="Close">
            <svg width="12" height="10" viewBox="0 0 12 10"><path d="M0.500 0.500h3L6 3l2.500-2.500h3L8 5l3.500 4.500h-3L6 7 3.500 9.500h-3L4 5z" fill="#fff" stroke="#5c2a2a" strokeWidth="0.8" /></svg>
          </WindowButton>
        </WindowButtons>
      </TitleBar>

      <MenuBar aria-label="Main">
        <TabList>
          {menuTabs.map(tab => (
            <TabItem key={tab}><TabLink href="#" $active={tab === 'Hosted Services'}>{tab}</TabLink></TabItem>
          ))}
        </TabList>
        <MenuTools>
          <button aria-label="Library"><BookIcon /></button>
          <button aria-label="Feedback"><HandIcon /></button>
          <button aria-label="About"><InfoIcon /></button>
        </MenuTools>
      </MenuBar>

      <Ribbon>
        {ribbonGroups.map(group => (
          <RibbonGroup key={group.title} $width={group.width}>
            <RibbonButtons>
              {group.commands.map(([label, icon]) => (
                <RibbonButton key={label}>{icon}<RibbonLabel>{label}</RibbonLabel></RibbonButton>
              ))}
            </RibbonButtons>
            <RibbonCaption>
              <RibbonTitle>{group.title}</RibbonTitle>
              <button aria-label={`${group.title} options`}><LaunchIcon /></button>
            </RibbonCaption>
          </RibbonGroup>
        ))}
      </Ribbon>

      <Body>
        <SidePanel>
          <SideHeader>
            <SideTitle>Menu Panel</SideTitle>
            <button aria-label="Pin panel"><PinIcon /></button>
            <button aria-label="Close panel"><CloseIcon /></button>
          </SideHeader>
          <SideFrame>
            <SideContent>
              <ServicesHeader aria-expanded="true">
                <ServicesIcon />
                <ServicesTitle>Services</ServicesTitle>
                <TriangleDown />
              </ServicesHeader>
              <SideList>
                {sideItems.map(([label, icon]) => (
                  <li key={label}><SideLink href="#">{icon}{label}</SideLink></li>
                ))}
              </SideList>
            </SideContent>
          </SideFrame>
        </SidePanel>

        <Main>
          <SubTabs aria-label="Hosted services pages">
            <TabList>
              {subTabs.map(tab => (
                <TabItem key={tab} $compact><TabLink href="#" $active={tab === 'View Backups'}>{tab}</TabLink></TabItem>
              ))}
            </TabList>
            <button aria-label="Close page"><CloseIcon /></button>
          </SubTabs>

          <ToolRow>
            <Toolbar>
              <Grip />
              <ToolButton><ArrowBallIcon />Backward</ToolButton>
              <ToolButton><ArrowBallIcon forward />Forward</ToolButton>
              <ToolButton><DateIcon />Today</ToolButton>
              <ToolButton disabled><ZoomIcon plus />Zoom In</ToolButton>
              <ToolButton disabled><ZoomIcon />Zoom Out</ToolButton>
              <Overflow aria-label="More navigation"><TriangleDown width={12} height={7} /></Overflow>
            </Toolbar>
            <Toolbar>
              <Grip />
              {viewModes.map(([label, icon]) => (
                <ToolButton key={label} $active={label === 'Week'}>{icon}{label}</ToolButton>
              ))}
              <Overflow aria-label="More views"><TriangleDown width={12} height={7} /></Overflow>
            </Toolbar>
          </ToolRow>

          <Workspace>
            <Week>
              {columns.map((days, i) => (
                <DayColumn key={i}>
                  {days.map(day => (
                    <Day key={day.label} $half={day.half}>
                      <DayHeader $today={day.today}>{day.label}</DayHeader>
                      {day.backups.length > 0 && (
                        <Events>
                          {day.backups.map(b => (
                            <EventSlot key={b.start}>
                              <EventBar $selected={b.selected}>
                                <span>{b.start}</span>
                                <span>{b.end}</span>
                                <span>{b.name}</span>
                              </EventBar>
                              {b.selected && (
                                <ContextMenu role="menu">
                                  <ContextItem role="menuitem">Delete Backup</ContextItem>
                                  <ContextItem role="menuitem" $hover>Restore Backup</ContextItem>
                                </ContextMenu>
                              )}
                            </EventSlot>
                          ))}
                        </Events>
                      )}
                    </Day>
                  ))}
                </DayColumn>
              ))}
            </Week>
            <ScrollRail>
              <button aria-label="Scroll up"><ScrollArrow /></button>
              <ScrollThumb />
              <button aria-label="Scroll down"><ScrollArrow down /></button>
            </ScrollRail>
            <Navigator>
              <Month month={may} arrows />
              <Month month={june} />
              <TodayButton>Today</TodayButton>
            </Navigator>
          </Workspace>
          <BottomStrip />
        </Main>
      </Body>

      <StatusBar>
        <StatusText>Subscription :: SQL Azure- 6M- Tech Acc</StatusText>
        <DotColumn />
        <StatusText>Storage Account :: mystorageacctest</StatusText>
        <DotGrid />
        <StatusText>Version :1.0.0.134</StatusText>
      </StatusBar>
    </Window>
  );
}
